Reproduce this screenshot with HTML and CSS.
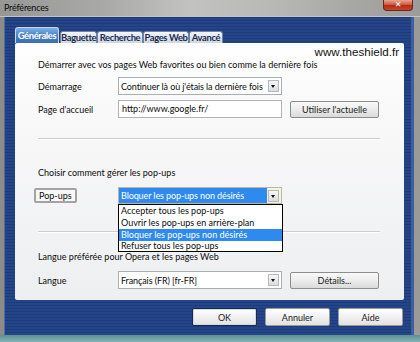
FILE: index.html
```html
<!DOCTYPE html>
<html lang="fr">
<head>
<meta charset="utf-8">
<title>Préférences</title>
<link rel="stylesheet" href="styles.css">
</head>
<body>
<div class="window">
  <div class="titlebar">
    <span class="title">Préférences</span>
    <div class="close">✕</div>
  </div>
  <div class="frame">
    <div class="body">
      <div class="tabs">
        <div class="tab active t1">Générales</div>
        <div class="tab t2">Baguette</div>
        <div class="tab t3">Recherche</div>
        <div class="tab t4">Pages Web</div>
        <div class="tab t5">Avancé</div>
      </div>
      <div class="panel">
        <div class="watermark">www.theshield.fr</div>
        <div class="heading h1">Démarrer avec vos pages Web favorites ou bien comme la dernière fois</div>
        <div class="row row1">
          <div class="label">Démarrage</div>
          <div class="select"><span class="value">Continuer là où j'étais la dernière fois</span><span class="arrow"></span></div>
        </div>
        <div class="row row2">
          <div class="label">Page d'accueil</div>
          <div class="field">http://www.google.fr/</div>
          <div class="btn side-btn">Utiliser l'actuelle</div>
        </div>
        <div class="sep sep1"></div>
        <div class="heading h2">Choisir comment gérer les pop-ups</div>
        <div class="row row3">
          <div class="label"><span class="boxed">Pop-ups</span></div>
          <div class="select open"><span class="value selected">Bloquer les pop-ups non désirés</span><span class="arrow"></span></div>
        </div>
        <div class="sep sep2"></div>
        <div class="heading h3">Langue préférée pour Opera et les pages Web</div>
        <div class="row row4">
          <div class="label">Langue</div>
          <div class="select"><span class="value">Français (FR) [fr-FR]</span><span class="arrow"></span></div>
          <div class="btn side-btn">Détails...</div>
        </div>
        <div class="dropdown">
          <div class="opt">Accepter tous les pop-ups</div>
          <div class="opt">Ouvrir les pop-ups en arrière-plan</div>
          <div class="opt hl">Bloquer les pop-ups non désirés</div>
          <div class="opt">Refuser tous les pop-ups</div>
        </div>
      </div>
      <div class="actions">
        <div class="btn act default">OK</div>
        <div class="btn act">Annuler</div>
        <div class="btn act">Aide</div>
      </div>
    </div>
  </div>
  <div class="bottom-strip"></div>
</div>
</body>
</html>
```
FILE: styles.css
```css
* { box-sizing: border-box; margin: 0; padding: 0; }
html, body { width: 420px; height: 342px; overflow: hidden; }
body {
  font-family: Lato, "Noto Sans", sans-serif;
  font-size: 9px;
  color: #0c0c0c;
  background: #8e8e8e;
}
.window { width: 420px; height: 342px; display: flex; flex-direction: column; }

.titlebar {
  height: 17px;
  flex: none;
  display: flex;
  justify-content: space-between;
  align-items: flex-start;
  padding: 0 7px 0 4px;
  background: linear-gradient(90deg, #979796 0%, #a9a9a7 25%, #c2c2c0 45%, #b8b8b6 65%, #a6a6a4 85%, #9c9c9a 100%);
  border-bottom: 1px solid #c4c4c2;
}
.title { font-size: 9px; letter-spacing: -0.2px; line-height: 12px; padding-top: 2px; color: #0a0a0a; }
.close {
  width: 30px; height: 11px;
  background: linear-gradient(#e9a594 0%, #d25a40 45%, #b52d18 55%, #c5462e 100%);
  border: 1px solid #6e2418; border-top: none;
  border-radius: 0 0 4px 4px;
  color: #fff; font-size: 8px; line-height: 10px; text-align: center; font-weight: bold;
  font-family: "DejaVu Sans", sans-serif;
}

.frame { flex: 1; display: flex; padding: 0 6px 0 4px; background: linear-gradient(90deg, #8c8b88, #9a9a98); }
.body {
  flex: 1;
  display: flex; flex-direction: column;
  padding: 10px 10px 0 10px;
  background: repeating-linear-gradient(180deg, #1e3a77 0px, #1e3a77 1px, #25458a 1px, #25458a 3px);
  border-left: 1px solid #4e6ca6;
  box-shadow: inset -3px 0 0 #3f5f9e;
}
.bottom-strip { height: 7px; flex: none; background: linear-gradient(#5e8f94, #86b3b1); }

.tabs { display: flex; align-items: flex-end; height: 16px; }
.tab {
  height: 12px;
  font-weight: bold;
  font-size: 9.4px;
  letter-spacing: -0.35px;
  line-height: 11px;
  text-align: center;
  white-space: nowrap;
  color: #1b2b4e;
  background: linear-gradient(#f3f6fa, #cdd6e3);
  border: 1px solid #6f82a3;
  border-bottom: none;
  border-radius: 3px 3px 0 0;
}
.t1 { width: 44px; }
.t2 { width: 37px; margin-left: 1px; }
.t3 { width: 46px; }
.t4 { width: 46px; }
.t5 { width: 34px; }
.tab.active {
  height: 16px;
  line-height: 15px;
  color: #fff;
  background: linear-gradient(#7fb0e4, #4a82c4 50%, #3a6fb2);
  border-color: #c8d8ee;
}

.panel {
  height: 257px;
  flex: none;
  position: relative;
  padding: 16px 24px 0 23px;
  background: linear-gradient(#fefefe, #f7f7f8 40%, #eeeff1);
  border-radius: 2px;
}
.watermark {
  position: absolute; right: 4px; top: 2px;
  font-family: "Liberation Sans", Arial, sans-serif;
  font-size: 11.6px; line-height: 14px;
  color: #111;
  background: #fff;
  padding: 0 1px;
}
.heading { height: 12px; line-height: 12px; }
.row { display: flex; align-items: center; height: 18px; }
.row1 { margin-top: 6px; }
.row2 { margin-top: 5px; }
.h2 { margin-top: 27px; }
.row3 { margin-top: 8px; height: 17px; }
.h3 { margin-top: 19px; height: 10px; line-height: 10px; }
.row4 { margin-top: 9px; }
.sep { height: 2px; border-top: 1px solid #cbcdd0; border-bottom: 1px solid #ffffff; }
.sep1 { margin-top: 20px; }
.sep2 { margin-top: 27px; }

.label { width: 80px; flex: none; }
.boxed {
  display: inline-block;
  margin-left: -4px;
  padding: 0 3px;
  height: 15px; line-height: 12px;
  border: 2px solid #a3a3a3;
  border-radius: 2px;
  background: #f8f8f8;
}
.select {
  width: 164px; height: 100%;
  display: flex; align-items: center;
  background: #fff;
  border: 1px solid #a9adb4;
  padding: 0 2px 0 0;
}
.value { flex: 1; padding-left: 2px; white-space: nowrap; overflow: hidden; letter-spacing: -0.1px; }
.value.selected {
  align-self: stretch;
  background: #2f8af0;
  color: #fff;
  line-height: 15px;
  margin: 0 1px 0 0;
}
.select.open { background: #f6f3df; border-color: #b9b7a6; }
.arrow {
  width: 11px; height: 12px; flex: none;
  border: 1px solid #b5b8bd;
  background: linear-gradient(#f7f7f7, #dcdde0);
  position: relative;
}
.arrow::after {
  content: "";
  position: absolute; left: 2px; top: 4px;
  border-left: 2.5px solid transparent;
  border-right: 2.5px solid transparent;
  border-top: 3px solid #111;
}
.field {
  width: 164px; height: 100%;
  background: #fff;
  border: 1px solid #b0b4ba;
  padding-left: 3px;
  line-height: 16px;
}
.btn {
  display: flex; align-items: center; justify-content: center;
  background: linear-gradient(#f9f9f9, #ececec 50%, #dadada);
  border: 1px solid #8d8d8d;
  border-radius: 2px;
  color: #1a1a1a;
}
.side-btn { width: 89px; height: 17px; margin-left: 8px; }

.dropdown {
  position: absolute;
  left: 103px; top: 161px;
  width: 165px;
  background: #fff;
  border: 1px solid #000;
}
.opt { height: 12px; line-height: 12px; padding-left: 2px; white-space: nowrap; }
.opt:last-child { height: 10px; line-height: 10px; }
.opt.hl { background: #2f8af0; color: #fff; }

.actions {
  display: flex; justify-content: flex-end; gap: 8px;
  margin-top: 8px; margin-right: 1px;
}
.act { width: 65px; height: 18px; background: linear-gradient(#ffffff, #f1f1f1 50%, #e2e2e2); border-color: #9a9a9a; }
.act.default { border: 1px solid #1d2a45; box-shadow: inset 0 0 0 1px #c9d9ef; }
```
